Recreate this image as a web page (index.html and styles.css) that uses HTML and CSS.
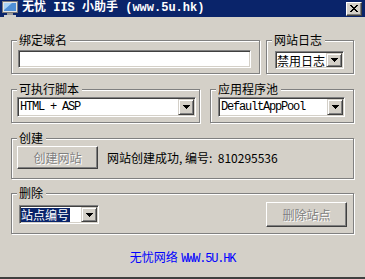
FILE: index.html
```html
<!DOCTYPE html>
<html lang="zh-CN">
<head>
    <meta charset="UTF-8">
    <title>无忧 IIS 小助手</title>
    <link rel="stylesheet" href="styles.css">
</head>
<body>
    <div class="window">
        <div class="titlebar">
            <svg class="app-icon" viewBox="0 0 16 16" width="16" height="16">
                <rect x="0.5" y="0.5" width="15" height="11" fill="#e4e4e4" stroke="#7a7a7a"/>
                <rect x="2" y="2" width="12" height="8" fill="#4f8fd6"/>
                <path d="M2 2h8L2 9z" fill="#a9d3f5"/>
                <rect x="5" y="12" width="6" height="2" fill="#9a9a9a"/>
                <rect x="2" y="14" width="12" height="2" fill="#cfcfcf"/>
            </svg>
            <span class="title">无忧 IIS 小助手 (www.5u.hk)</span>
            <span class="close-btn">
                <svg width="8" height="7" viewBox="0 0 8 7"><path d="M0 0h2v1H0zM6 0h2v1H6zM1 1h2v1H1zM5 1h2v1H5zM2 2h4v1H2zM3 3h2v1H3zM2 4h4v1H2zM1 5h2v1H1zM5 5h2v1H5zM0 6h2v1H0zM6 6h2v1H6z" fill="#000"/></svg>
            </span>
        </div>

        <div class="client">
            <div class="row">
                <fieldset class="group group-domain">
                    <legend>绑定域名</legend>
                    <div class="group-body">
                        <div class="textbox"></div>
                    </div>
                </fieldset>
                <fieldset class="group group-log">
                    <legend>网站日志</legend>
                    <div class="group-body">
                        <div class="combo combo-log">
                            <span class="combo-text">禁用日志</span>
                            <span class="combo-btn"><svg width="7" height="4" viewBox="0 0 7 4"><path d="M0 0h7v1H0zM1 1h5v1H1zM2 2h3v1H2zM3 3h1v1H3z"/></svg></span>
                        </div>
                    </div>
                </fieldset>
            </div>

            <div class="row row-gap">
                <fieldset class="group group-script">
                    <legend>可执行脚本</legend>
                    <div class="group-body">
                        <div class="combo combo-wide">
                            <span class="combo-text mono">HTML + ASP</span>
                            <span class="combo-btn"><svg width="7" height="4" viewBox="0 0 7 4"><path d="M0 0h7v1H0zM1 1h5v1H1zM2 2h3v1H2zM3 3h1v1H3z"/></svg></span>
                        </div>
                    </div>
                </fieldset>
                <fieldset class="group group-pool">
                    <legend>应用程序池</legend>
                    <div class="group-body">
                        <div class="combo combo-wide">
                            <span class="combo-text mono">DefaultAppPool</span>
                            <span class="combo-btn"><svg width="7" height="4" viewBox="0 0 7 4"><path d="M0 0h7v1H0zM1 1h5v1H1zM2 2h3v1H2zM3 3h1v1H3z"/></svg></span>
                        </div>
                    </div>
                </fieldset>
            </div>

            <fieldset class="group group-create row-gap">
                <legend>创建</legend>
                <div class="group-body">
                    <span class="btn btn-create">创建网站</span>
                    <span class="status">网站创建成功, 编号:&nbsp; 810295536</span>
                </div>
            </fieldset>

            <fieldset class="group group-delete row-gap-sm">
                <legend>删除</legend>
                <div class="group-body">
                    <div class="combo combo-id">
                        <span class="combo-text"><span class="selected">站点编号</span></span>
                        <span class="combo-btn"><svg width="7" height="4" viewBox="0 0 7 4"><path d="M0 0h7v1H0zM1 1h5v1H1zM2 2h3v1H2zM3 3h1v1H3z"/></svg></span>
                    </div>
                    <span class="btn btn-delete">删除站点</span>
                </div>
            </fieldset>

            <div class="footer">无忧网络 <span class="mono">WWW.5U.HK</span></div>
        </div>
    </div>
</body>
</html>
```

FILE: styles.css
```css
body {
    margin: 0;
    background: #d4d0c8;
    font-family: "Noto Sans CJK SC", sans-serif;
    font-size: 12px;
    color: #000;
}

.window {
    height: 279px;
    box-sizing: border-box;
    border-bottom: 2px solid #404040;
    overflow: hidden;
}

/* Title bar */
.titlebar {
    height: 17px;
    background: #0a246a;
    display: flex;
    align-items: center;
    color: #fff;
}

.app-icon {
    margin: 0 4px 0 2px;
    flex: none;
}

.title {
    flex: 1;
    font: bold 12px "Liberation Mono", "Noto Sans CJK SC", monospace;
    line-height: 17px;
    white-space: nowrap;
}

.close-btn {
    width: 16px;
    height: 14px;
    box-sizing: border-box;
    margin-right: 3px;
    background: #d4d0c8;
    border: 1px solid;
    border-color: #fff #404040 #404040 #fff;
    box-shadow: inset -1px -1px #808080;
    display: flex;
    align-items: center;
    justify-content: center;
}

/* Client area */
.client {
    padding: 17px 11px 0 11px;
}

.row {
    display: flex;
    justify-content: space-between;
}

.group {
    margin: 0;
    padding: 0;
    min-width: 0;
    box-sizing: border-box;
    border: 1px solid #808080;
    box-shadow: 1px 1px #fff, inset 1px 1px #fff;
}

.row-gap {
    margin-top: 9px;
}

.row-gap-sm {
    margin-top: 8px;
}

.group legend {
    margin-left: 5px;
    padding: 0 3px 0 2px;
    line-height: 12px;
    background: #d4d0c8;
}

.group-domain { width: 249px; }
.group-domain .group-body { padding: 4px 8px 5px 6px; }

.group-log { width: 88px; }
.group-log .group-body { padding: 5px 9px 4px 8px; }

.group-script { width: 189px; }
.group-script .group-body { padding: 2px 3px 5px 5px; }

.group-pool { width: 144px; }
.group-pool .group-body { padding: 2px 8px 5px 7px; }

.group-create .group-body {
    display: flex;
    align-items: center;
    gap: 9px;
    padding: 2px 5px 9px 5px;
}

.group-delete .group-body {
    display: flex;
    align-items: center;
    justify-content: space-between;
    padding: 3px 6px 6px 7px;
}

/* Controls */
.textbox {
    height: 18px;
    box-sizing: border-box;
    background: #fff;
    border: 1px solid;
    border-color: #808080 #fff #fff #808080;
    box-shadow: inset 1px 1px #404040, inset -1px -1px #d4d0c8;
}

.combo {
    display: flex;
    box-sizing: border-box;
    padding: 1px;
    background: #fff;
    border: 1px solid;
    border-color: #808080 #fff #fff #808080;
    box-shadow: inset 1px 1px #404040, inset -1px -1px #d4d0c8;
}

.combo-log { height: 18px; }
.combo-wide { height: 20px; }
.combo-id { width: 80px; height: 19px; }

.combo-text {
    flex: 1;
    min-width: 0;
    display: flex;
    align-items: center;
    white-space: nowrap;
}

.combo-btn {
    width: 16px;
    flex: none;
    box-sizing: border-box;
    background: #d4d0c8;
    border: 1px solid;
    border-color: #d4d0c8 #404040 #404040 #d4d0c8;
    box-shadow: inset 1px 1px #fff, inset -1px -1px #808080;
    display: flex;
    align-items: center;
    justify-content: center;
}

.mono {
    font-family: "Liberation Mono", monospace;
    font-size: 12px;
    letter-spacing: -1.2px;
    padding-left: 1px;
}

.selected {
    background: #0a246a;
    color: #fff;
    line-height: 14px;
    padding-right: 1px;
}

.btn {
    width: 81px;
    box-sizing: border-box;
    background: #d4d0c8;
    border: 1px solid;
    border-color: #fff #404040 #404040 #fff;
    box-shadow: inset -1px -1px #808080;
    color: #808080;
    text-shadow: 1px 1px #fff;
    display: flex;
    align-items: center;
    justify-content: center;
}

.btn-create { height: 23px; }
.btn-delete { height: 25px; }

.status {
    white-space: nowrap;
}

.footer {
    margin-top: 15px;
    line-height: 16px;
    text-align: center;
    color: #0000ff;
}
```
